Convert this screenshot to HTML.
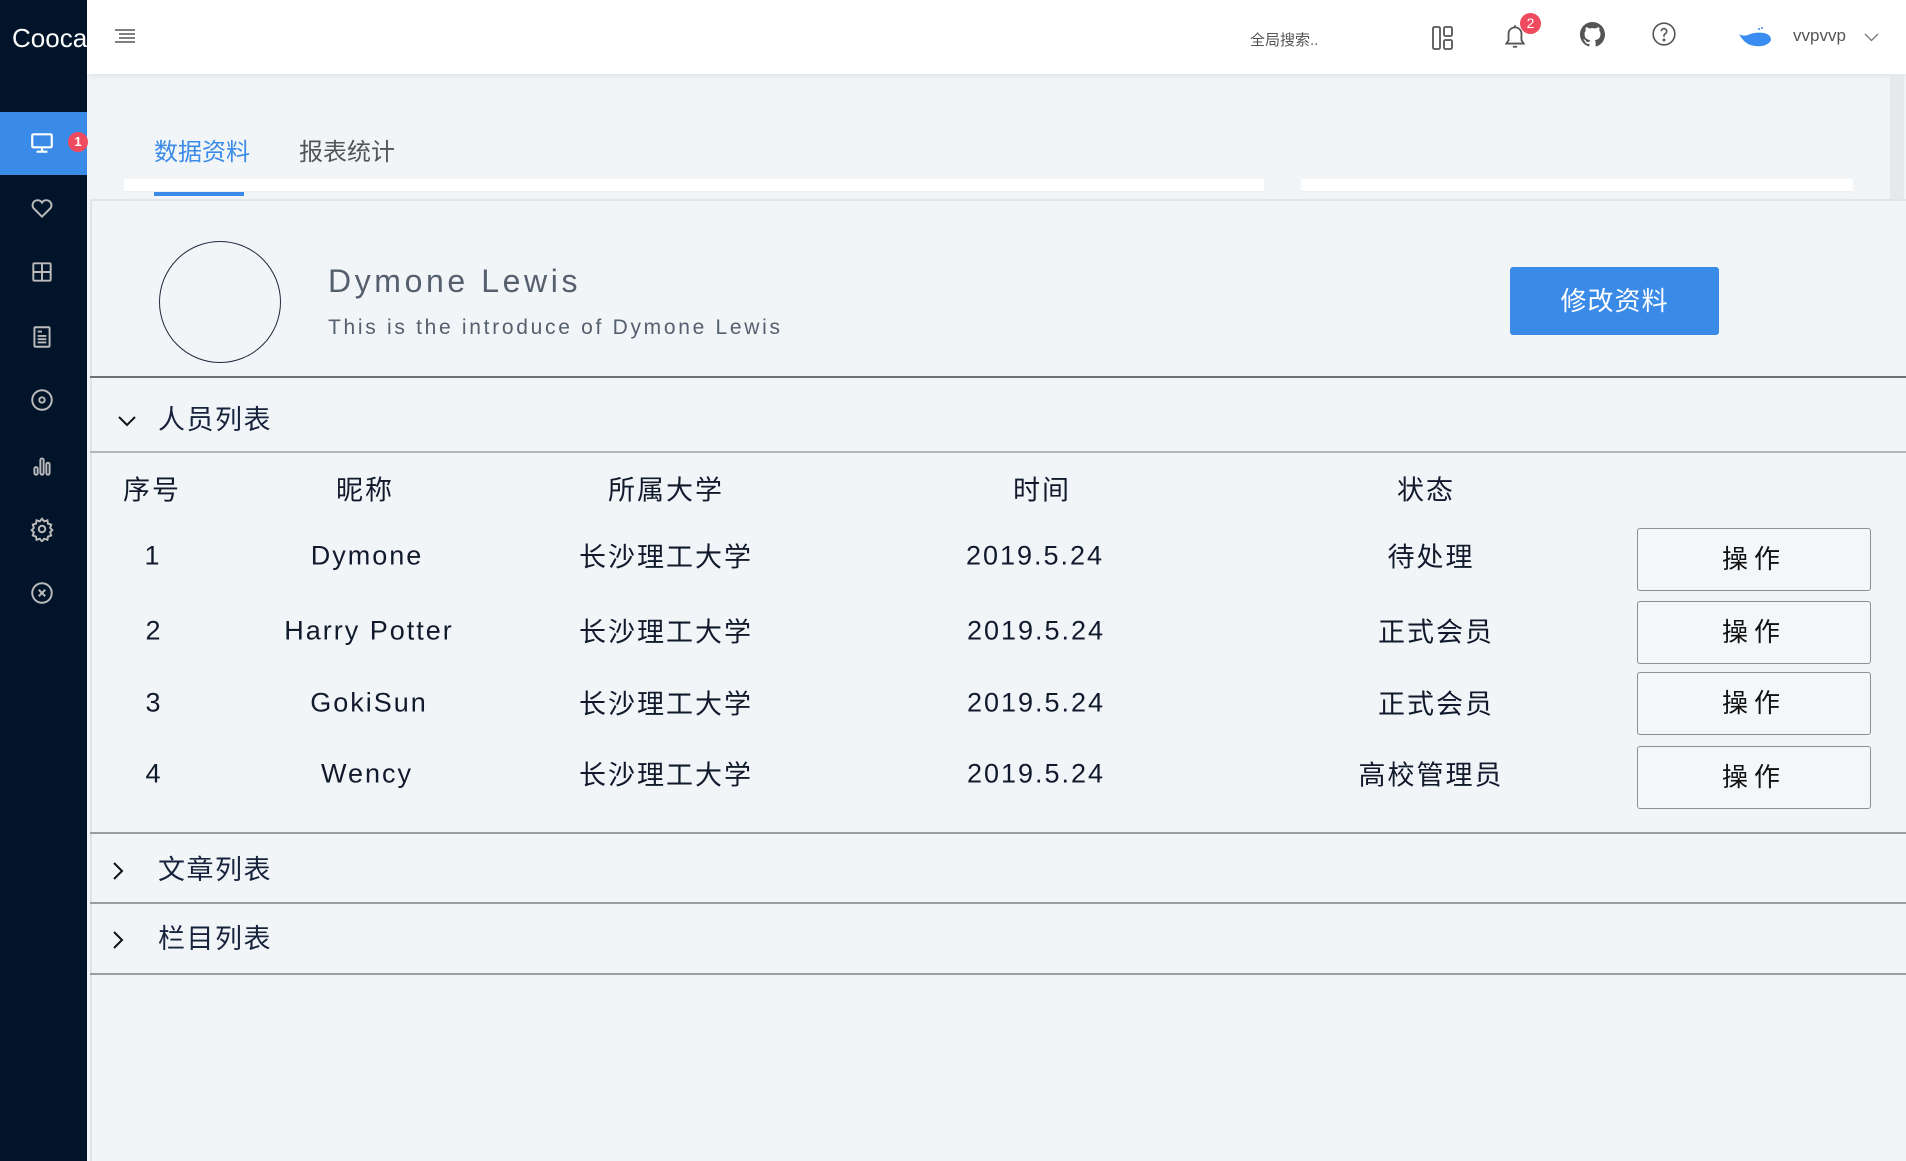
<!DOCTYPE html>
<html><head><meta charset="utf-8"><style>
*{margin:0;padding:0;box-sizing:border-box}
body{width:1906px;height:1161px;overflow:hidden;background:#f1f5f8;font-family:"Liberation Sans","Noto Sans CJK SC",sans-serif;position:relative;color:#17233d}
.a{position:absolute}
.side{left:0;top:0;width:87px;height:1161px;background:#021429}
.hdr{left:87px;top:0;width:1819px;height:74px;background:#fff;box-shadow:0 2px 6px rgba(0,0,0,.08)}
.ic{position:absolute;left:29px;width:26px;height:26px}
.t{position:absolute;white-space:nowrap;transform:translate(-50%,-50%);font-size:27px;letter-spacing:2px;color:#111a2c}
.btn{position:absolute;left:1637px;width:234px;height:63px;border:1px solid #8a8f96;border-radius:3px;background:#f4f7fa;font-size:26px;letter-spacing:6px;text-align:center;line-height:61px;color:#111}
.hl{position:absolute;left:90px;width:1816px;height:2px}
</style></head><body>
<div class="a side"></div>
<div class="a" style="left:12px;top:23px;color:#fff;font-size:26px">Cooca</div>
<div class="a" style="left:0;top:112px;width:87px;height:63px;background:#3a8ae8"></div>
<div class="a" style="left:68px;top:132px;width:20px;height:20px;border-radius:50%;background:#f04a5e;color:#fff;font-size:13px;text-align:center;line-height:20px;font-weight:bold">1</div>
<svg class="ic" style="top:130px" viewBox="0 0 24 24" fill="none" stroke="#fff" stroke-width="2"><rect x="3" y="4" width="18" height="12" rx="1"/><path d="M12 16v4M7 20h10"/></svg>
<svg class="ic" style="top:195px" viewBox="0 0 24 24" fill="none" stroke="#bbb" stroke-width="1.8"><path d="M12 20l-8-8a4.5 4.5 0 0 1 8-5 4.5 4.5 0 0 1 8 5z"/></svg>
<svg class="ic" style="top:259px" viewBox="0 0 24 24" fill="none" stroke="#bbb" stroke-width="1.8"><rect x="4" y="4" width="16" height="16" rx="1"/><path d="M12 4v16M4 12h16"/></svg>
<svg class="ic" style="top:324px" viewBox="0 0 24 24" fill="none" stroke="#bbb" stroke-width="1.8"><rect x="5" y="3" width="14" height="18" rx="1"/><path d="M8 7h4M8 11h8M8 14h8M8 17h8"/></svg>
<svg class="ic" style="top:387px" viewBox="0 0 24 24" fill="none" stroke="#bbb" stroke-width="1.8"><circle cx="12" cy="12" r="9"/><circle cx="12" cy="12" r="2.5"/></svg>
<svg class="ic" style="top:453px" viewBox="0 0 24 24" fill="none" stroke="#bbb" stroke-width="1.8"><rect x="5" y="13" width="3" height="7" rx="1.5"/><rect x="10.5" y="5" width="3" height="15" rx="1.5"/><rect x="16" y="9" width="3" height="11" rx="1.5"/></svg>
<svg class="ic" style="top:516px" viewBox="0 0 24 24" fill="none" stroke="#bbb" stroke-width="1.8"><circle cx="12" cy="12" r="3"/><path d="M12 2.5l2 2.5 3-1 .5 3 3 1-1 3 2 2-2 2 1 3-3 1-.5 3-3-1-2 2.5-2-2.5-3 1-.5-3-3-1 1-3-2-2 2-2-1-3 3-1 .5-3 3 1z"/></svg>
<svg class="ic" style="top:580px" viewBox="0 0 24 24" fill="none" stroke="#bbb" stroke-width="1.8"><circle cx="12" cy="12" r="9"/><path d="M9 9l6 6M15 9l-6 6"/></svg>

<div class="a hdr"></div>
<svg class="a" style="left:114px;top:28px" width="22" height="16" viewBox="0 0 22 16" stroke="#555" stroke-width="1.6"><path d="M1 2h20M5 6h16M5 10h16M1 14h20"/></svg>
<div class="a" style="left:1250px;top:29px;font-size:15px;color:#555">全局搜索..</div>
<svg class="a" style="left:1431px;top:25px" width="24" height="26" viewBox="0 0 24 26" fill="none" stroke="#555" stroke-width="1.8"><rect x="2" y="2" width="7" height="22" rx="1.5"/><rect x="13" y="2" width="8" height="9" rx="1.5"/><rect x="13" y="15" width="8" height="9" rx="1.5"/></svg>
<svg class="a" style="left:1502px;top:22px" width="26" height="28" viewBox="0 0 24 26" fill="none" stroke="#555" stroke-width="1.7"><path d="M4 20h16l-2-3v-6a6 6 0 0 0-12 0v6zM10 23h4M12 3v2"/></svg>
<div class="a" style="left:1520px;top:13px;width:21px;height:21px;border-radius:50%;background:#f04a5e;color:#fff;font-size:14px;text-align:center;line-height:21px">2</div>
<svg class="a" style="left:1580px;top:22px" width="25" height="25" viewBox="0 0 16 16"><path fill="#555" d="M8 0C3.58 0 0 3.58 0 8c0 3.540 2.29 6.53 5.47 7.59.4.07.55-.17.55-.38v-1.33c-2.23.48-2.7-1.07-2.7-1.07-.36-.93-.89-1.170-.89-1.17-.73-.5.05-.49.05-.49.8.06 1.23.83 1.23.83.71 1.22 1.87.87 2.33.66.07-.52.28-.87.51-1.07-1.78-.2-3.64-.89-3.64-3.95 0-.87.31-1.59.82-2.15-.08-.2-.36-1.02.08-2.12 0 0 .67-.21 2.2.82a7.6 7.6 0 0 1 4 0c1.53-1.04 2.2-.82 2.2-.82.44 1.1.16 1.92.08 2.12.51.56.82 1.27.82 2.15 0 3.07-1.87 3.75-3.65 3.950.29.25.54.73.54 1.48v2.2c0 .21.15.46.55.38A8 8 0 0 0 16 8c0-4.42-3.58-8-8-8z"/></svg>
<svg class="a" style="left:1651px;top:21px" width="26" height="26" viewBox="0 0 24 24" fill="none" stroke="#555" stroke-width="1.5"><circle cx="12" cy="12" r="10"/><path d="M9.5 9.5a2.5 2.5 0 1 1 3.5 2.3c-.7.4-1 .9-1 1.7v1"/><circle cx="12" cy="17.5" r=".6" fill="#555"/></svg>
<svg class="a" style="left:1737px;top:26px" width="36" height="22" viewBox="0 0 36 22"><path fill="#3b8cf0" d="M2 8c3 2 6 2 9 1 4-2 10-3 16-2 5 1 7 4 7 7-2 5-9 7-16 6C10 19 6 15 2 8z"/><circle cx="22" cy="3" r="1" fill="#3b8cf0"/><circle cx="25" cy="2" r="1" fill="#3b8cf0"/></svg>
<div class="a" style="left:1793px;top:26px;font-size:17px;color:#555">vvpvvp</div>
<svg class="a" style="left:1864px;top:33px" width="15" height="9" viewBox="0 0 15 9" fill="none" stroke="#777" stroke-width="1.3"><path d="M1 1l6.5 6.5L14 1"/></svg>
<div class="a" style="left:1890px;top:74px;width:14px;height:126px;background:#e6e9ec"></div>

<div class="a" style="left:154px;top:132px;font-size:24px;color:#3a8ae8">数据资料</div>
<div class="a" style="left:299px;top:132px;font-size:24px;color:#555">报表统计</div>
<div class="a" style="left:124px;top:179px;width:1140px;height:14px;background:#fff;border-bottom:2px solid #eef0f2"></div>
<div class="a" style="left:1301px;top:179px;width:552px;height:14px;background:#fff;border-bottom:2px solid #eef0f2"></div>
<div class="a" style="left:154px;top:192px;width:90px;height:4px;background:#3a8ae8"></div>

<div class="a" style="left:90px;top:199px;width:1816px;height:962px;border-left:2px solid #e2e4e6;border-top:2px solid #e2e4e6"></div>
<div class="a" style="left:159px;top:241px;width:122px;height:122px;border:1.5px solid #1f2a3a;border-radius:50%"></div>
<div class="a" style="left:328px;top:263px;font-size:32px;letter-spacing:3.6px;color:#555f6d">Dymone Lewis</div>
<div class="a" style="left:328px;top:316px;font-size:21px;letter-spacing:2.7px;color:#555f6d">This is the introduce of Dymone Lewis</div>
<div class="a" style="left:1510px;top:267px;width:209px;height:68px;background:#3a8ae8;border-radius:3px;color:#fff;font-size:26px;text-align:center;line-height:68px;letter-spacing:1px">修改资料</div>

<div class="hl" style="top:376px;background:#6d7177"></div>
<svg class="a" style="left:117px;top:415px" width="20" height="12" viewBox="0 0 20 12" fill="none" stroke="#111" stroke-width="2"><path d="M2 2l8 8 8-8"/></svg>
<div class="a" style="left:158px;top:398px;font-size:27px;letter-spacing:1.5px">人员列表</div>
<div class="hl" style="top:451px;background:#b4b7ba"></div>

<div class="t" style="left:152px;top:488px">序号</div>
<div class="t" style="left:365px;top:488px">昵称</div>
<div class="t" style="left:666px;top:488px">所属大学</div>
<div class="t" style="left:1042px;top:488px">时间</div>
<div class="t" style="left:1426px;top:488px">状态</div>

<div class="t" style="left:153px;top:556px">1</div><div class="t" style="left:367px;top:556px">Dymone</div><div class="t" style="left:666px;top:555px">长沙理工大学</div><div class="t" style="left:1035px;top:556px">2019.5.24</div><div class="t" style="left:1431px;top:555px">待处理</div>
<div class="t" style="left:154px;top:631px">2</div><div class="t" style="left:369px;top:631px">Harry Potter</div><div class="t" style="left:666px;top:630px">长沙理工大学</div><div class="t" style="left:1036px;top:631px">2019.5.24</div><div class="t" style="left:1436px;top:630px">正式会员</div>
<div class="t" style="left:154px;top:703px">3</div><div class="t" style="left:369px;top:703px">GokiSun</div><div class="t" style="left:666px;top:702px">长沙理工大学</div><div class="t" style="left:1036px;top:703px">2019.5.24</div><div class="t" style="left:1436px;top:702px">正式会员</div>
<div class="t" style="left:154px;top:774px">4</div><div class="t" style="left:367px;top:774px">Wency</div><div class="t" style="left:666px;top:773px">长沙理工大学</div><div class="t" style="left:1036px;top:774px">2019.5.24</div><div class="t" style="left:1431px;top:773px">高校管理员</div>
<div class="btn" style="top:528px">操作</div>
<div class="btn" style="top:601px">操作</div>
<div class="btn" style="top:672px">操作</div>
<div class="btn" style="top:746px">操作</div>

<div class="hl" style="top:832px;background:#9a9ea3"></div>
<svg class="a" style="left:112px;top:861px" width="12" height="20" viewBox="0 0 12 20" fill="none" stroke="#111" stroke-width="2"><path d="M2 2l8 8-8 8"/></svg>
<div class="a" style="left:158px;top:848px;font-size:27px;letter-spacing:1.5px">文章列表</div>
<div class="hl" style="top:902px;background:#9a9ea3"></div>
<svg class="a" style="left:112px;top:930px" width="12" height="20" viewBox="0 0 12 20" fill="none" stroke="#111" stroke-width="2"><path d="M2 2l8 8-8 8"/></svg>
<div class="a" style="left:158px;top:917px;font-size:27px;letter-spacing:1.5px">栏目列表</div>
<div class="hl" style="top:973px;background:#9a9ea3"></div>
</body></html>
